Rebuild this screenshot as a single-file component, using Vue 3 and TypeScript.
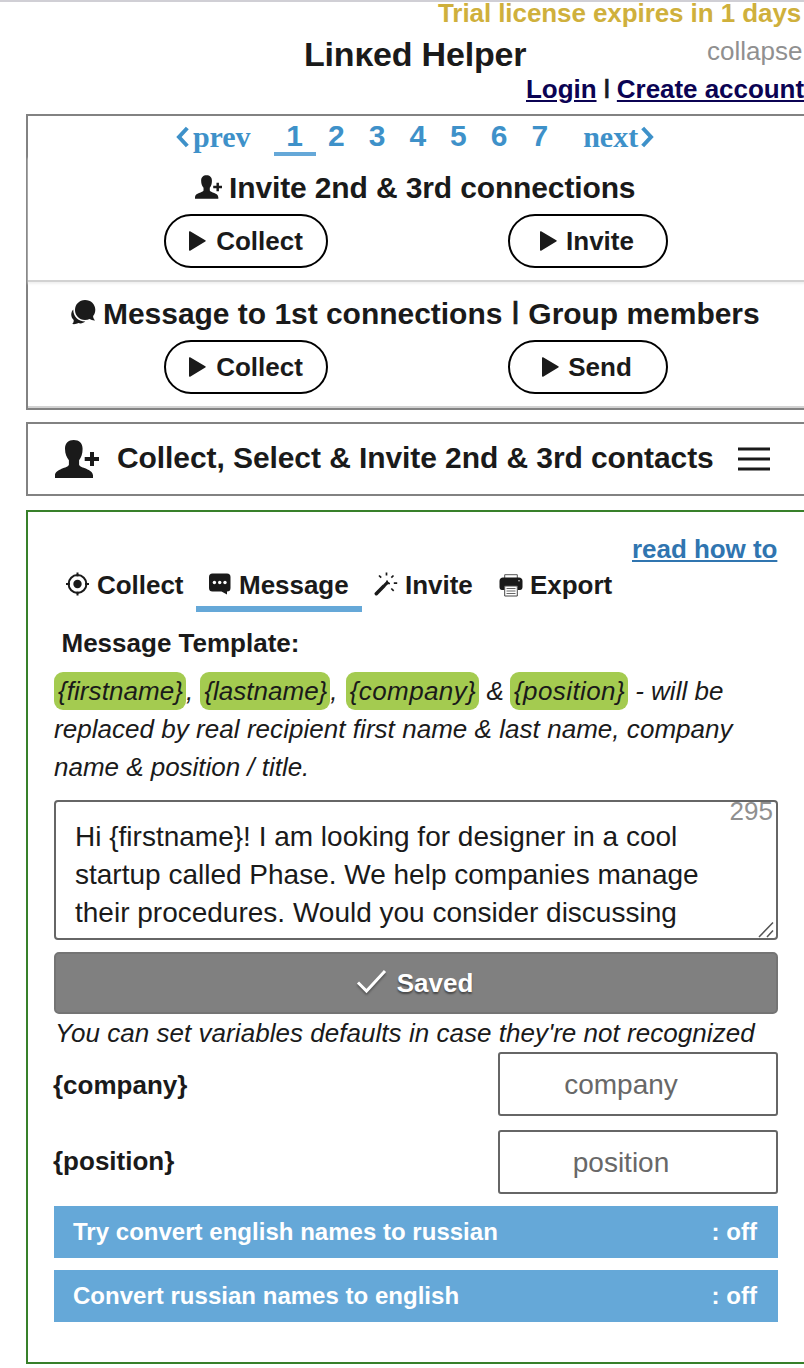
<script setup lang="ts">
import { ref } from 'vue'

const page = ref(1)
const pages = [1, 2, 3, 4, 5, 6, 7]

const message = ref(
  'Hi {firstname}! I am looking for designer in a cool startup called Phase. We help companies manage their procedures. Would you consider discussing',
)

const variables = ['company', 'position']

const converters = [
  { label: 'Try convert english names to russian', state: 'off' },
  { label: 'Convert russian names to english', state: 'off' },
]
</script>

<template>
  <div class="page">
    <header class="top">
      <div class="trial">Trial license expires in 1 days</div>
      <div class="brand-row">
        <h1 class="brand">Linĸed Helper</h1>
        <span class="collapse">collapse</span>
      </div>
      <div class="account">
        <a>Login</a><span class="bar">|</span><a>Create account</a>
      </div>
    </header>

    <section class="panel actions">
      <nav class="pager">
        <span class="step prev">
          <svg width="13" height="22" viewBox="0 0 13 22"><path d="M11.300 2 3 11l8.300 9" fill="none" stroke="currentColor" stroke-width="4" /></svg>prev
        </span>
        <span v-for="n in pages" :key="n" class="num" :class="{ active: n === page }">{{ n }}</span>
        <span class="step next">next<svg width="13" height="22" viewBox="0 0 13 22"><path d="m1.700 2 8.300 9-8.300 9" fill="none" stroke="currentColor" stroke-width="4" /></svg></span>
      </nav>

      <div class="group">
        <h2 class="invite-title">
          <svg class="person-sm" width="27" height="24" viewBox="0 0 44 38">
            <path d="M18.700 0c5.500 0 8.900 3.200 8.900 8.800 0 5.400-1.500 8.700-3.500 11.500v4.400c.8 3.400 13.900 4 13.900 10.800V38H0v-2.500c0-6.800 13.100-7.400 13.900-10.800v-4.400c-2-2.800-3.900-6.100-3.900-11.500C10 3.200 13.400 0 18.700 0z" />
            <path d="M29.700 17H35v-5h4v5h5v4h-5v5h-4v-5h-5.300z" />
          </svg>
          <span>Invite 2nd &amp; 3rd connections</span>
        </h2>
        <div class="buttons">
          <button class="pill wide"><svg width="17" height="20" viewBox="0 0 17 20"><path d="M0 .8C0 .2.600 0 1.100.3l15.200 8.900c.6.400.6 1 0 1.400L1.100 19.700c-.5.300-1.100.1-1.100-.6z" /></svg>Collect</button>
          <button class="pill"><svg width="17" height="20" viewBox="0 0 17 20"><path d="M0 .8C0 .2.600 0 1.100.3l15.200 8.900c.6.400.6 1 0 1.400L1.100 19.700c-.5.300-1.100.1-1.100-.6z" /></svg>Invite</button>
        </div>
      </div>

      <div class="group second">
        <h2 class="message-title">
          <svg class="chat" width="25" height="25" viewBox="0 0 25 25">
            <path d="M14 0c5.900 0 10.300 4.200 10.300 9.800 0 2.600-.8 4.600-2.200 6.300.1 2 .8 3.300 1.900 4.300-2 .1-3.900-.3-5.400-1.300-1.400.6-2.900.9-4.600.9C8.300 20 4 15.600 4 10S8.300 0 14 0z" />
            <path d="M2.300 9.500C2 15.800 6.500 21.400 14.300 21.600c-2 1.700-4.500 2.200-7 1.500-1.600.9-3.700 1.400-6.100 1 1.200-1 1.600-2.200 1.500-4C-.5 17-.5 12.400 2.300 9.500z" />
          </svg>
          <span>Message to 1st connections</span><span class="bar big">|</span><span>Group members</span>
        </h2>
        <div class="buttons">
          <button class="pill wide"><svg width="17" height="20" viewBox="0 0 17 20"><path d="M0 .8C0 .2.600 0 1.100.3l15.200 8.900c.6.400.6 1 0 1.400L1.100 19.700c-.5.300-1.100.1-1.100-.6z" /></svg>Collect</button>
          <button class="pill"><svg width="17" height="20" viewBox="0 0 17 20"><path d="M0 .8C0 .2.600 0 1.100.3l15.200 8.900c.6.400.6 1 0 1.400L1.100 19.700c-.5.300-1.100.1-1.100-.6z" /></svg>Send</button>
        </div>
      </div>
    </section>

    <section class="panel summary">
      <svg class="person" width="44" height="38" viewBox="0 0 44 38">
        <path d="M18.700 0c5.500 0 8.900 3.200 8.900 8.800 0 5.400-1.500 8.700-3.500 11.500v4.400c.8 3.400 13.900 4 13.900 10.800V38H0v-2.500c0-6.800 13.100-7.400 13.900-10.800v-4.400c-2-2.800-3.900-6.100-3.900-11.500C10 3.200 13.400 0 18.700 0z" />
        <path d="M29.700 17H35v-5h4v5h5v4h-5v5h-4v-5h-5.300z" />
      </svg>
      <h2>Collect, Select &amp; Invite 2nd &amp; 3rd contacts</h2>
      <svg class="menu" width="32" height="24" viewBox="0 0 32 24"><path d="M0 2h32M0 12h32M0 22h32" stroke="currentColor" stroke-width="3" /></svg>
    </section>

    <section class="panel editor">
      <div class="help"><a>read how to</a></div>

      <div class="tabs">
        <span class="tab collect">
          <svg width="23" height="24" viewBox="0 0 23 24">
            <circle cx="11.500" cy="12" r="8.900" fill="none" stroke="currentColor" stroke-width="2" />
            <circle cx="11.500" cy="12" r="4.200" />
            <path d="M11.500.5v4M11.500 19.500v4M0 12h4M19 12h4" stroke="currentColor" stroke-width="2" />
          </svg>Collect
        </span>
        <span class="tab message active">
          <svg width="23" height="22" viewBox="0 0 23 22">
            <path d="M4.500.5H19A3.500 3.500 0 0 1 22.500 4v11a3.500 3.500 0 0 1-3.500 3.500v3L13.500 18.500h-9A3.500 3.500 0 0 1 1 15V4A3.500 3.500 0 0 1 4.500.5z" />
            <g fill="#fff"><circle cx="6.400" cy="9.500" r="1.700" /><circle cx="11.700" cy="9.500" r="1.700" /><circle cx="17" cy="9.500" r="1.700" /></g>
          </svg>Message
        </span>
        <span class="tab invite">
          <svg width="24" height="24" viewBox="0 0 24 24" fill="none" stroke="currentColor">
            <path d="m2.300 21.700 7.600-7.700" stroke-width="3.500" stroke-linecap="round" />
            <path d="m10.500 13.400 3-3" stroke-width="3" />
            <path d="M13 8.500v3h3M12.500.5v3M5 3.500l2.200 2.200M19.500 3.500l-2.200 2.200M19.800 11.200h3.400M17.300 16.500l2.400 2.300" stroke-width="1.700" />
          </svg>Invite
        </span>
        <span class="tab export">
          <svg width="24" height="23" viewBox="0 0 24 23">
            <path d="M5.700 4V.7h12.600V4" fill="#fff" stroke="#555" />
            <path d="M4 3.500h16c2 0 3.500 1.500 3.500 3.500v6c0 2-1 3-2.500 3h-2.500v-4h-13v4H3c-1.500 0-2.500-1-2.500-3V7c0-2 1.500-3.500 3.500-3.500z" />
            <path d="M5.700 12h12.600v10H5.700z" fill="#fff" stroke="#444" />
            <path d="M7.500 14.500h9M7.500 17h9M7.500 19.500h9" stroke="#666" />
            <circle cx="20" cy="6.700" r=".7" fill="#fff" />
          </svg>Export
        </span>
      </div>

      <h3>Message Template:</h3>

      <p class="hint">
        <span class="line"><mark class="first">{firstname}</mark>, <mark class="last">{lastname}</mark>,&nbsp;<mark class="company">{company}</mark> &amp; <mark class="position">{position}</mark> - will be</span>
        <span class="line full">replaced by real recipient first name &amp; last name, company</span>
        <span class="line short">name &amp; position / title.</span>
      </p>

      <div class="field">
        <div class="text">{{ message }}</div>
        <span class="count">295</span>
        <svg class="grip" width="17" height="17" viewBox="0 0 17 17"><path d="M1 16 15 1.500M9 16l6-6.500" stroke="#555" stroke-width="1.500" /></svg>
      </div>

      <button class="saved">
        <svg width="32" height="26" viewBox="0 0 32 26"><path d="M2 13.500 10.500 22 29 2" fill="none" stroke="currentColor" stroke-width="3" /></svg>
        <span>Saved</span>
      </button>

      <p class="defaults">You can set variables defaults in case they're not recognized</p>

      <div v-for="name in variables" :key="name" class="variable">
        <label>{{ '{' + name + '}' }}</label>
        <div class="input">{{ name }}</div>
      </div>

      <div v-for="c in converters" :key="c.label" class="converter">
        <span>{{ c.label }}</span>
        <span class="state">: {{ c.state }}</span>
      </div>
    </section>
  </div>
</template>

<style>
body {
  background: #fff;
}
</style>

<style scoped>
.page {
  box-sizing: border-box;
  width: 804px;
  height: 1368px;
  overflow: hidden;
  border-top: 2px solid #d0cfd5;
  font: bold 26px "Liberation Sans", Arial, sans-serif;
  color: #1a1a1a;
  white-space: nowrap;
}
h1, h2, h3, p {
  margin: 0;
  font-weight: bold;
}
svg {
  flex: none;
  fill: currentColor;
}
.top {
  height: 112px;
}
.trial {
  height: 24px;
  padding-left: 438px;
  line-height: 22px;
  letter-spacing: -0.08px;
  color: #cfb03c;
}
.brand-row {
  display: flex;
  height: 48px;
  margin-top: 4px;
  padding-left: 304px;
}
.brand {
  width: 403px;
  font-size: 34px;
  line-height: 48px;
  letter-spacing: -0.2px;
}
.collapse {
  font-weight: normal;
  line-height: 42px;
  color: #909090;
}
.account {
  display: flex;
  margin-top: -6px;
  padding-left: 526px;
  line-height: 34px;
  letter-spacing: -0.05px;
}
.account a {
  color: #0b0353;
  text-decoration: underline;
  text-decoration-thickness: 2px;
  text-underline-offset: 2px;
}
.bar {
  width: 22px;
  font-size: 20px;
  line-height: 30px;
  text-align: center;
  -webkit-text-stroke: 0.7px currentColor;
}
.bar.big {
  width: 26px;
  font-size: 23px;
}
.panel {
  box-sizing: border-box;
  width: 800px;
  margin-left: 26px;
  border: 2px solid #828282;
}
.actions {
  height: 296px;
}
.pager {
  display: flex;
  height: 40px;
  padding-left: 148px;
  line-height: 40px;
  color: #3e91c9;
}
.step {
  display: flex;
  font-family: "Liberation Serif", "Times New Roman", serif;
  font-size: 30px;
  line-height: 42px;
}
.step svg {
  margin-top: 10px;
}
.prev {
  width: 98px;
  letter-spacing: -0.1px;
}
.prev svg {
  margin-right: 4px;
}
.next {
  margin-left: 23px;
}
.next svg {
  margin-left: 3px;
}
.num {
  box-sizing: border-box;
  width: 40.700px;
  height: 40px;
  font-size: 30px;
  text-align: center;
}
.num.active {
  width: 42px;
  padding-right: 1px;
  border-bottom: 4px solid #65a8d8;
}
.group {
  height: 124px;
  border-bottom: 2px solid #d2d2d2;
  box-shadow: 0 2px 2px #f1f1f1;
}
.group h2 {
  display: flex;
  height: 58px;
  font-size: 30px;
  letter-spacing: -0.13px;
}
.invite-title {
  padding-left: 167px;
  line-height: 64px;
}
.person-sm {
  margin: 19px 7px 0 0;
}
.second h2 {
  padding-left: 43px;
  line-height: 64px;
  letter-spacing: -0.03px;
}
.second .bar {
  line-height: 59px;
}
.second {
  box-shadow: none;
}
.chat {
  margin: 18px 7px 0 0;
}
.buttons {
  display: flex;
  justify-content: space-between;
  width: 504px;
  margin-left: 136px;
}
.pill {
  display: flex;
  align-items: center;
  justify-content: center;
  box-sizing: border-box;
  width: 160px;
  height: 54px;
  padding: 0 2px 0 0;
  border: 2px solid #000;
  border-radius: 27px;
  background: #fff;
  color: inherit;
  font: inherit;
}
.pill.wide {
  width: 164px;
  padding: 0;
}
.pill svg {
  margin-right: 9px;
}
.pill.wide svg {
  margin-right: 10px;
}
.summary {
  display: flex;
  align-items: flex-start;
  height: 74px;
  margin-top: 12px;
}
.summary .person {
  margin: 16px 0 0 27px;
}
.summary h2 {
  width: 620px;
  margin-left: 18px;
  font-size: 30px;
  line-height: 68px;
  letter-spacing: -0.08px;
}
.summary .menu {
  margin: 23px 0 0 1px;
}
.editor {
  height: 854px;
  margin-top: 14px;
  padding: 18px 0 0 26px;
  border-color: #38802a;
}
.help {
  height: 38px;
  padding-left: 578px;
  line-height: 38px;
  letter-spacing: -0.05px;
}
.help a {
  color: #3075b0;
  text-decoration: underline;
  text-decoration-thickness: 2px;
  text-underline-offset: 2px;
}
.tabs {
  display: flex;
  height: 44px;
  line-height: 34px;
}
.tab {
  box-sizing: border-box;
  display: flex;
  height: 44px;
  letter-spacing: -0.03px;
}
.tab svg {
  margin-right: 8px;
}
.collect {
  width: 142px;
  padding-left: 12px;
}
.collect svg {
  margin-top: 4px;
}
.message {
  width: 166px;
  padding-left: 12px;
}
.message svg {
  margin-top: 5px;
}
.active.tab {
  border-bottom: 6px solid #65a8d8;
}
.invite {
  width: 136px;
  padding-left: 12px;
}
.invite svg {
  margin: 4px 7px 0 0;
}
.export svg {
  margin: 6px 7px 0 0;
}
.export {
  padding-left: 1px;
}
h3 {
  padding-left: 7.500px;
  font-size: 26px;
  line-height: 62px;
  height: 60px;
}
.hint {
  height: 128px;
  font-style: italic;
  font-weight: normal;
}
.line {
  display: block;
  height: 38px;
  line-height: 38px;
}
.line.full {
  letter-spacing: 0.04px;
}
.line.short {
  letter-spacing: -0.02px;
}
mark {
  display: inline-block;
  padding: 0 3px 0 4px;
  height: 38px;
  border-radius: 9px;
  background: #a4cb50;
  color: inherit;
}
mark.first {
  letter-spacing: 0.06px;
}
mark.company {
  margin-left: 1px;
  letter-spacing: 0.4px;
}
mark.position {
  margin-left: -1px;
  letter-spacing: 0.4px;
}
.field {
  position: relative;
  box-sizing: border-box;
  width: 724px;
  height: 140px;
  padding: 16px 40px 0 19px;
  border: 2px solid #666;
  border-radius: 4px;
  font-size: 28px;
  font-weight: normal;
  line-height: 38px;
}
.text {
  white-space: normal;
}
.count {
  position: absolute;
  top: -6px;
  right: 3px;
  font-size: 26px;
  line-height: 30px;
  color: #909090;
}
.grip {
  position: absolute;
  right: 1px;
  bottom: 0;
}
.saved {
  display: flex;
  align-items: center;
  justify-content: center;
  box-sizing: border-box;
  width: 724px;
  height: 62px;
  margin-top: 12px;
  padding: 0 3px 0 0;
  border: 2px solid #747474;
  border-radius: 5px;
  background: #808080;
  color: #fff;
  font: inherit;
  text-shadow: 0 2px 2px rgba(0, 0, 0, 0.45);
}
.saved svg {
  margin: 0 9px 2px 0;
  filter: drop-shadow(0 2px 1px rgba(0, 0, 0, 0.35));
}
.defaults {
  height: 38px;
  padding-left: 1px;
  font-style: italic;
  font-weight: normal;
  line-height: 38px;
  letter-spacing: 0.04px;
}
.variable {
  display: flex;
  justify-content: space-between;
  width: 724px;
  height: 64px;
  margin-bottom: 14px;
}
.variable label {
  margin-left: -1px;
  line-height: 66px;
}
.variable + .variable {
  margin-bottom: 12px;
}
.variable + .variable label {
  line-height: 62px;
}
.input {
  box-sizing: border-box;
  width: 280px;
  height: 64px;
  padding-right: 34px;
  border: 2px solid #666;
  border-radius: 3px;
  font-size: 28px;
  font-weight: normal;
  line-height: 62px;
  text-align: center;
  color: #686868;
}
.converter {
  box-sizing: border-box;
  display: flex;
  justify-content: space-between;
  width: 724px;
  height: 52px;
  margin-bottom: 12px;
  padding: 0 21px 0 19px;
  background: #65a8d8;
  color: #fff;
  font-size: 24px;
  line-height: 52px;
  letter-spacing: 0.02px;
}
</style>
